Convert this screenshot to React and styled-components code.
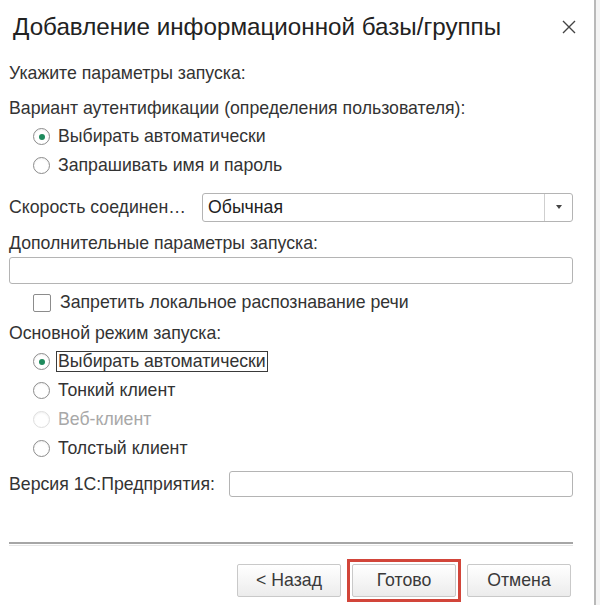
import styled, { createGlobalStyle } from "styled-components";

const GlobalStyle = createGlobalStyle`
  html, body {
    margin: 0;
    padding: 0;
    background: #ffffff;
  }
  body {
    font-family: "Liberation Sans", Arial, sans-serif;
    color: #333333;
  }
`;

const Screen = styled.div`
  width: 600px;
  height: 605px;
  display: flex;
  overflow: hidden;
  background: #ffffff;
`;

const Dialog = styled.div`
  width: 594px;
  height: 605px;
  display: flex;
  flex-direction: column;
  background: #ffffff;
`;

const EdgeStrip = styled.div`
  flex: 1;
  border-left: 2px solid #b9b9b9;
  background: #f4f4f4;
`;

const Header = styled.div`
  height: 59px;
  display: flex;
  align-items: flex-start;
  justify-content: space-between;
  padding: 11px 17px 0 13px;
  box-sizing: border-box;
`;

const Title = styled.div`
  font-size: 24.2px;
  line-height: 32px;
  color: #222222;
`;

const CloseButton = styled.div`
  width: 16px;
  height: 16px;
  margin-top: 8px;
  display: flex;
  align-items: center;
  justify-content: center;
`;

const Body = styled.div`
  display: flex;
  flex-direction: column;
  padding: 0 21px 0 9px;
  font-size: 17.7px;
`;

const Label = styled.div`
  height: 28px;
  line-height: 28px;
  margin-top: ${(p) => p.$mt || 0}px;
  white-space: nowrap;
`;

const OptionRow = styled.div`
  height: 29px;
  display: flex;
  align-items: center;
  padding-left: 24px;
  color: ${(p) => (p.$disabled ? "#a8a8a8" : "#333333")};
  margin-top: ${(p) => p.$mt || 0}px;
`;

const Radio = styled.span`
  width: 15px;
  height: 15px;
  border-radius: 50%;
  border: 1px solid ${(p) => (p.$disabled ? "#dedede" : "#8c8c8c")};
  background: #ffffff;
  display: inline-flex;
  align-items: center;
  justify-content: center;
  margin-right: 8px;
  flex-shrink: 0;
  box-shadow: inset 0 1px 2px rgba(0, 0, 0, 0.06);

  &::after {
    content: "";
    width: 6px;
    height: 6px;
    border-radius: 50%;
    background: #1e8a5c;
    display: ${(p) => (p.$checked ? "block" : "none")};
  }
`;

const Checkbox = styled.span`
  width: 16px;
  height: 16px;
  border: 1px solid #8c8c8c;
  border-radius: 2px;
  background: #ffffff;
  margin-right: 9px;
  flex-shrink: 0;
`;

const OptionText = styled.span`
  line-height: 19px;
  padding: 0 1px;
  border: 1px solid ${(p) => (p.$focused ? "#3a3a3a" : "transparent")};
  margin-left: -2px;
`;

const FieldRow = styled.div`
  height: ${(p) => p.$h || 30}px;
  display: flex;
  align-items: center;
  margin-top: ${(p) => p.$mt || 0}px;
`;

const FieldLabel = styled.div`
  width: ${(p) => p.$w}px;
  flex-shrink: 0;
  white-space: nowrap;
  overflow: hidden;
  text-overflow: ellipsis;
  padding-right: ${(p) => p.$pr || 0}px;
  box-sizing: border-box;
`;

const Select = styled.div`
  flex: 1;
  height: 29px;
  border: 1px solid #b4b4b4;
  border-radius: 3px;
  display: flex;
  box-sizing: border-box;
`;

const SelectValue = styled.div`
  flex: 1;
  padding-left: 5px;
  line-height: 27px;
  color: #222222;
`;

const SelectArrow = styled.div`
  width: 27px;
  border-left: 1px solid #cfcfcf;
  display: flex;
  align-items: center;
  justify-content: center;

  &::after {
    content: "";
    border-left: 3px solid transparent;
    border-right: 3px solid transparent;
    border-top: 4px solid #444444;
  }
`;

const TextInput = styled.div`
  flex: 1;
  height: ${(p) => p.$h || 27}px;
  border: 1px solid #b4b4b4;
  border-radius: 3px;
  box-sizing: border-box;
  background: #ffffff;
`;

const Separator = styled.div`
  margin-top: 45px;
  height: 1px;
  border-top: 2px solid #a6a6a6;
  border-bottom: 1px solid #e6e6e6;
`;

const Footer = styled.div`
  display: flex;
  justify-content: flex-end;
  align-items: center;
  gap: 11px;
  padding-right: 2px;
  margin-top: 18px;
`;

const FocusRing = styled.div`
  padding: 2px;
  margin: -5px;
  border: 3px solid #d2453a;
`;

const Button = styled.div`
  width: 104px;
  height: 33px;
  box-sizing: border-box;
  border: 1px solid #c9c9c9;
  border-radius: 2px;
  background: linear-gradient(#ffffff, #ececec);
  display: flex;
  align-items: center;
  justify-content: center;
  color: #3a3a3a;
`;

const CloseIcon = () => (
  <svg width="14" height="14" viewBox="0 0 14 14">
    <path d="M1 1 L13 13 M13 1 L1 13" stroke="#444" strokeWidth="1.4" />
  </svg>
);

export default function App() {
  return (
    <Screen>
      <GlobalStyle />
      <Dialog>
        <Header>
          <Title>Добавление информационной базы/группы</Title>
          <CloseButton>
            <CloseIcon />
          </CloseButton>
        </Header>
        <Body>
          <Label>Укажите параметры запуска:</Label>
          <Label $mt={7}>Вариант аутентификации (определения пользователя):</Label>
          <OptionRow>
            <Radio $checked />
            <OptionText>Выбирать автоматически</OptionText>
          </OptionRow>
          <OptionRow>
            <Radio />
            <OptionText>Запрашивать имя и пароль</OptionText>
          </OptionRow>
          <FieldRow $mt={12}>
            <FieldLabel $w={193} $pr={10}>Скорость соединения:</FieldLabel>
            <Select>
              <SelectValue>Обычная</SelectValue>
              <SelectArrow />
            </Select>
          </FieldRow>
          <Label $mt={7}>Дополнительные параметры запуска:</Label>
          <FieldRow $h={27}>
            <TextInput />
          </FieldRow>
          <OptionRow $mt={4}>
            <Checkbox />
            <OptionText>Запретить локальное распознавание речи</OptionText>
          </OptionRow>
          <Label $mt={2}>Основной режим запуска:</Label>
          <OptionRow>
            <Radio $checked />
            <OptionText $focused>Выбирать автоматически</OptionText>
          </OptionRow>
          <OptionRow>
            <Radio />
            <OptionText>Тонкий клиент</OptionText>
          </OptionRow>
          <OptionRow $disabled>
            <Radio $disabled />
            <OptionText>Веб-клиент</OptionText>
          </OptionRow>
          <OptionRow>
            <Radio />
            <OptionText>Толстый клиент</OptionText>
          </OptionRow>
          <FieldRow $h={26} $mt={8}>
            <FieldLabel $w={220}>Версия 1С:Предприятия:</FieldLabel>
            <TextInput $h={26} />
          </FieldRow>
          <Separator />
          <Footer>
            <Button>&lt; Назад</Button>
            <FocusRing>
              <Button>Готово</Button>
            </FocusRing>
            <Button>Отмена</Button>
          </Footer>
        </Body>
      </Dialog>
      <EdgeStrip />
    </Screen>
  );
}
